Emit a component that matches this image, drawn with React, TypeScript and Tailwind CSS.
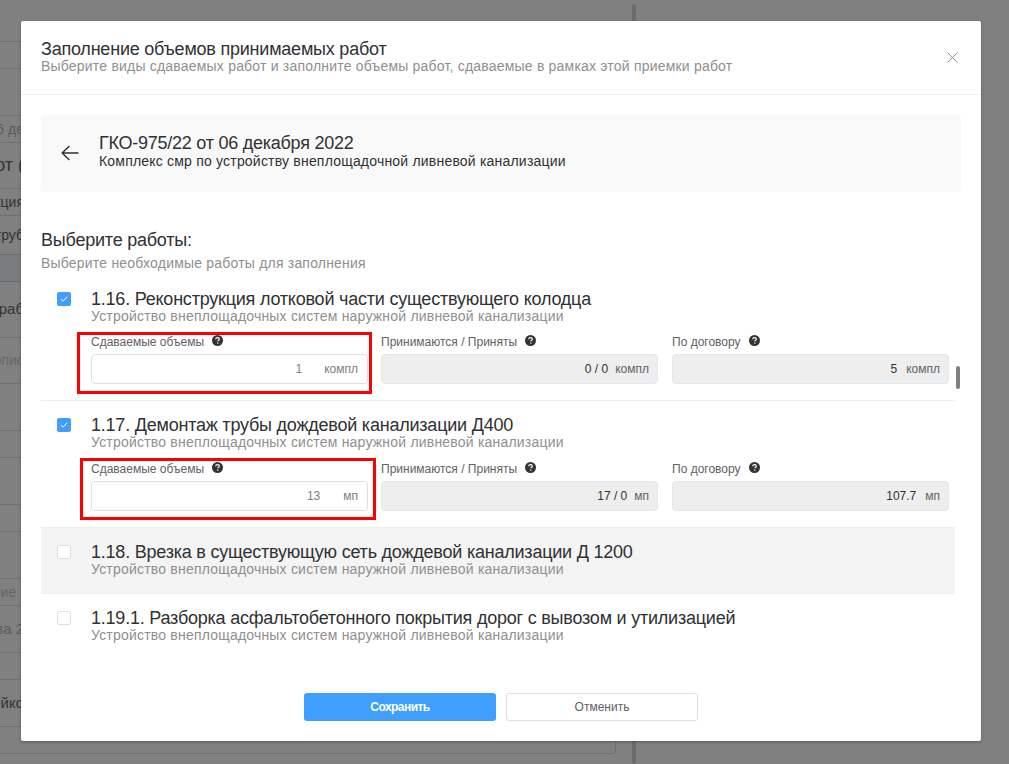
import React from "react";

const F = "font-['Liberation_Sans',Arial,sans-serif]";

function Help() {
  return (
    <svg width="11" height="11" viewBox="0 0 16 16" className="ml-2 shrink-0">
      <circle cx="8" cy="8" r="8" fill="#333" />
      <path d="M5.4 6.1c0-1.5 1.2-2.4 2.7-2.4s2.6.9 2.6 2.1c0 1.9-2.2 1.8-2.2 3.4" fill="none" stroke="#fff" strokeWidth="1.7" />
      <rect x="7.5" y="10.8" width="1.8" height="1.8" fill="#fff" />
    </svg>
  );
}

function Check({ on }: { on: boolean }) {
  return on ? (
    <div className="w-[14px] h-[14px] rounded-[2px] bg-[#409eff] flex items-center justify-center">
      <svg width="10" height="10" viewBox="0 0 10 10">
        <path d="M2 5.2 4.2 7.2 8 2.8" fill="none" stroke="#fff" strokeWidth="1" />
      </svg>
    </div>
  ) : (
    <div className="w-[14px] h-[14px] rounded-[2px] bg-white border border-[#dcdfe6]" />
  );
}

function Head({ on, title }: { on: boolean; title: string }) {
  return (
    <div className="flex">
      <div className="w-[50px] pl-[16px] pt-[3px] shrink-0">
        <Check on={on} />
      </div>
      <div>
        <div className="text-[18px] leading-[20px] tracking-[-0.22px] text-[#303133]">{title}</div>
        <div className="text-[14px] leading-[16px] tracking-[0.2px] text-[#8f8f8f] -mt-[1px]">
          Устройство внеплощадочных систем наружной ливневой канализации
        </div>
      </div>
    </div>
  );
}

function Field({ label, value, unit, ml, gapUnit }: { label: string; value: string; unit: string; ml: string; gapUnit: string }) {
  return (
    <div className={`w-[277px] ${ml} shrink-0`}>
      <div className="flex items-center h-[16px] text-[12px] text-[#606266]">
        <span>{label}</span>
        <span className="-mt-[3px]"><Help /></span>
      </div>
      <div className="mt-[4px] h-[30px] rounded-[4px] border border-[#e4e7ed] bg-[#eeeeee] flex items-center justify-end pr-[8px] text-[12px] text-[#303133]">
        <span>{value}</span>
        <span className={`${gapUnit} text-[#606266]`}>{unit}</span>
      </div>
    </div>
  );
}

function Editable({ value, unit, gap }: { value: string; unit: string; gap: string }) {
  return (
    <div className="w-[277px] shrink-0">
      <div className="flex items-center h-[16px] text-[12px] text-[#606266]">
        <span>Сдаваемые объемы</span>
        <span className="-mt-[3px]"><Help /></span>
      </div>
      <div className="mt-[4px] h-[30px] rounded-[4px] border border-[#dcdfe6] bg-white flex items-center justify-end pr-[9px] text-[12px] text-[#7d7d7d]">
        <span className={gap}>{value}</span>
        <span>{unit}</span>
      </div>
    </div>
  );
}

function BgRow({ h, text, size, tone }: { h: string; text?: string; size?: string; tone?: string }) {
  return (
    <div className={`${h} border-b border-[#6f6f6f] flex items-center`}>
      {text ? (
        <div className={`w-[24px] overflow-hidden flex justify-end whitespace-nowrap ${size ?? "text-[14px]"} ${tone ?? "text-[#333]"}`}>
          <span className="shrink-0">{text}</span>
        </div>
      ) : null}
    </div>
  );
}

export default function App() {
  return (
    <div className={`relative w-[1009px] h-[764px] overflow-hidden bg-[#808080] ${F}`}>
      {/* dimmed page behind the dialog */}
      <div className="flex h-full">
        <div className="w-[616px] shrink-0">
          <BgRow h="h-[42px]" />
          <div className="border-r border-b border-[#6f6f6f] rounded-br-[4px]">
            <BgRow h="h-[27px]" />
            <BgRow h="h-[47px]" />
            <BgRow h="h-[27px]" text="от 06 де" tone="text-[#5c5c5c]" />
            <BgRow h="h-[46px]" text="работ (" size="text-[18px]" />
            <BgRow h="h-[27px]" text="акция" />
            <BgRow h="h-[39px]" text="ая труб" />
            <div className="h-[27px] border-b border-[#5f6c78] bg-[#7a7d80]" />
            <BgRow h="h-[56px]" text="раб" size="text-[15px]" />
            <BgRow h="h-[46px]" text="опис" tone="text-[#666]" />
            <BgRow h="h-[47px]" />
            <BgRow h="h-[27px]" />
            <BgRow h="h-[47px]" />
            <BgRow h="h-[27px]" />
            <BgRow h="h-[47px]" />
            <BgRow h="h-[27px]" text={"ние\u00a0\u00a0"} tone="text-[#666]" />
            <BgRow h="h-[47px]" text="аза 2" size="text-[15px]" tone="text-[#5c5c5c]" />
            <BgRow h="h-[27px]" />
            <BgRow h="h-[47px]" text="ейко" size="text-[15px]" />
            <div className="h-[26px]" />
          </div>
        </div>
        <div className="ml-[16px] mt-[4px] w-[4px] h-[760px] rounded-[2px] bg-[#6c6c6c]" />
      </div>

      {/* dialog */}
      <div className="absolute left-[21px] top-[21px] w-[960px] h-[720px] bg-white rounded-[2px] shadow-[0_1px_3px_rgba(0,0,0,0.3)] flex flex-col">
        <div className="h-[74px] shrink-0 border-b border-[#ebeef5] pl-[20px] pr-[23px] pt-[18px] flex justify-between">
          <div>
            <div className="text-[18px] leading-[20px] tracking-[-0.22px] text-[#303133] font-normal">Заполнение объемов принимаемых работ</div>
            <div className="text-[14px] leading-[16px] tracking-[0.2px] text-[#8f8f8f] -mt-[1px]">
              Выберите виды сдаваемых работ и заполните объемы работ, сдаваемые в рамках этой приемки работ
            </div>
          </div>
          <svg width="11" height="11" viewBox="0 0 11 11" className="mt-[13px]">
            <path d="M.5.5l10 10M10.5.5l-10 10" stroke="#909399" strokeWidth="1" fill="none" />
          </svg>
        </div>

        <div className="px-[20px] pt-[20px] flex-1 relative">
          <div className="h-[77px] w-[920px] rounded-[4px] bg-[#f9f9f9] flex items-center">
            <svg width="18" height="16" viewBox="0 0 18 16" className="ml-[20px] mb-[2px] shrink-0">
              <path d="M17.5 8H1.2M8.4.9 1.2 8l7.2 7.1" stroke="#303133" strokeWidth="1.4" fill="none" />
            </svg>
            <div className="ml-[20px] mb-[5px]">
              <div className="text-[18px] leading-[20px] tracking-[-0.25px] text-[#303133]">ГКО-975/22 от 06 декабря 2022</div>
              <div className="text-[14px] leading-[16px] tracking-[0.2px] text-[#303133]">Комплекс смр по устройству внеплощадочной ливневой канализации</div>
            </div>
          </div>

          <div className="mt-[38px] text-[18px] leading-[20px] tracking-[-0.22px] text-[#303133]">Выберите работы:</div>
          <div className="mt-[5px] text-[14px] leading-[16px] tracking-[0.2px] text-[#8f8f8f]">Выберите необходимые работы для заполнения</div>

          <div className="w-[914px] mt-[9px]">
            <div className="h-[121px] pt-[9px] border-b border-[#ebeef5]">
              <Head on title="1.16. Реконструкция лотковой части существующего колодца" />
              <div className="flex pl-[50px] mt-[10px]">
                <div className="relative">
                  <Editable value="1" unit="компл" gap="mr-[22px]" />
                  <div className="absolute left-[-14px] top-[-2px] w-[295px] h-[62px] border-[3px] border-[#ff0000]" />
                </div>
                <Field label="Принимаются / Приняты" value="0 / 0" unit="компл" ml="ml-[13px]" gapUnit="ml-[7px]" />
                <Field label="По договору" value="5" unit="компл" ml="ml-[14px]" gapUnit="ml-[9px]" />
              </div>
            </div>
            <div className="h-[126px] pt-[14px]">
              <Head on title="1.17. Демонтаж трубы дождевой канализации Д400" />
              <div className="flex pl-[50px] mt-[11px]">
                <div className="relative">
                  <Editable value="13" unit="мп" gap="mr-[23px]" />
                  <div className="absolute left-[-11px] top-[-3px] w-[296px] h-[62px] border-[3px] border-[#ff0000]" />
                </div>
                <Field label="Принимаются / Приняты" value="17 / 0" unit="мп" ml="ml-[13px]" gapUnit="ml-[7px]" />
                <Field label="По договору" value="107.7" unit="мп" ml="ml-[14px]" gapUnit="ml-[9px]" />
              </div>
            </div>
            <div className="h-[67px] pt-[14px] bg-[#f4f4f4] border-y border-[#ebeef5]">
              <Head on={false} title="1.18. Врезка в существующую сеть дождевой канализации Д 1200" />
            </div>
            <div className="pt-[14px]">
              <Head on={false} title="1.19.1. Разборка асфальтобетонного покрытия дорог с вывозом и утилизацией" />
            </div>
          </div>

          <div className="absolute right-[21px] top-[271px] w-[4px] h-[23px] rounded-[2px] bg-[#808080]" />
        </div>

        <div className="h-[48px] shrink-0 pb-[20px] flex justify-center gap-[10px]">
          <div className="w-[192px] h-[28px] rounded-[3px] bg-[#409eff] flex items-center justify-center text-[12px] font-bold tracking-[-0.55px] text-white">Сохранить</div>
          <div className="w-[192px] h-[28px] rounded-[3px] bg-white border border-[#dcdfe6] flex items-center justify-center text-[12px] text-[#606266]">Отменить</div>
        </div>
      </div>
    </div>
  );
}
